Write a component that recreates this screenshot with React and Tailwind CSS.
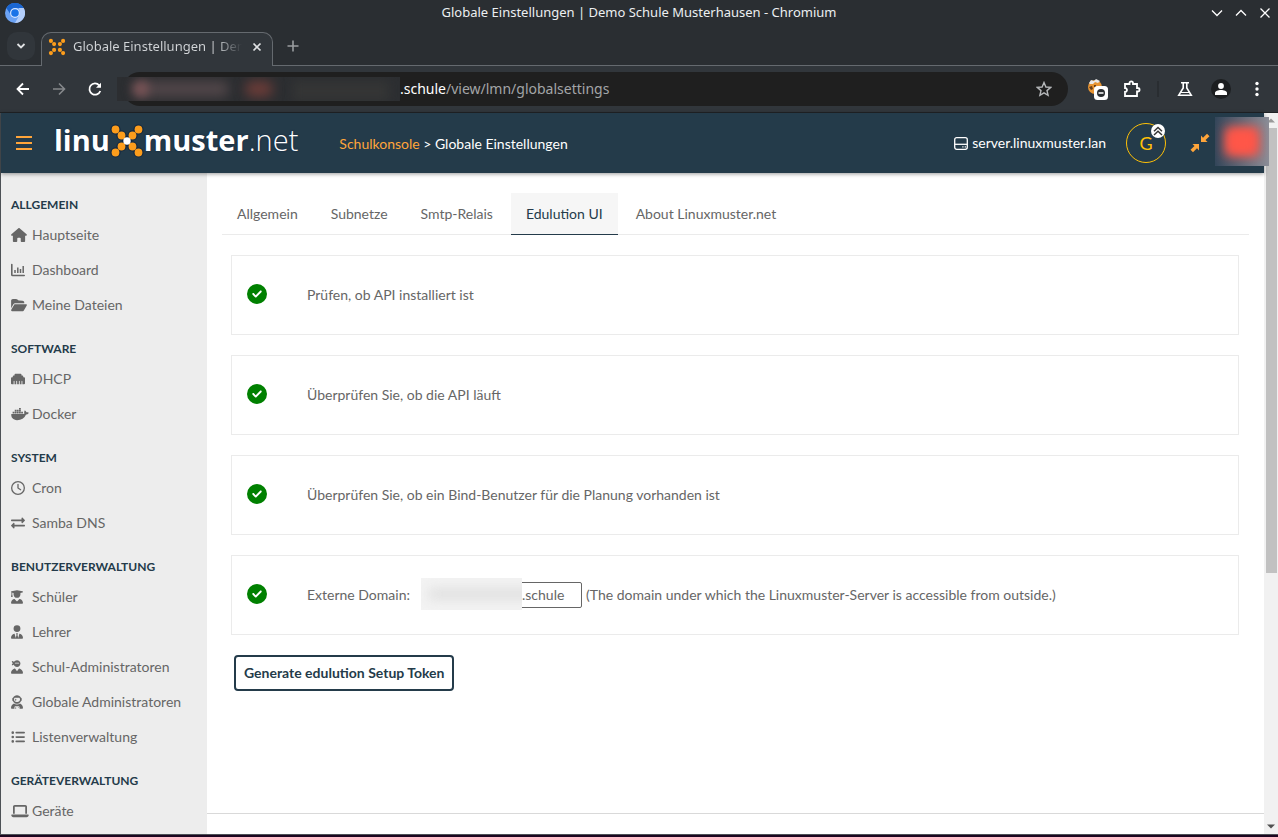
import React from "react";
import { FaExchangeAlt } from "react-icons/fa";
import {
  FaHouse, FaFolderOpen, FaEthernet, FaDocker, FaRegClock, FaUserGraduate,
  FaUserTie, FaUserNinja, FaUserAstronaut, FaListUl, FaLaptop, FaCircleCheck,
} from "react-icons/fa6";

function ChartIcon({ className }) {
  return (
    <svg viewBox="0 0 14 14" className={className} fill="none" stroke="currentColor" strokeLinecap="round">
      <path d="M.8 1.500V11.700Q.8 12.500 1.600 12.500H13.200" strokeWidth="1.600" />
      <path d="M4 7v3M6.800 4.500v5.500M9.500 6v4M12.200 3v7" strokeWidth="1.500" strokeLinecap="butt" />
    </svg>
  );
}

const narrow = "h-3.5 w-3";
const square = "size-3.5";
const wide = "h-3.5 w-4";
const widest = "h-3.5 w-[18px]";

const groups = [
  {
    title: "ALLGEMEIN",
    items: [["Hauptseite", FaHouse, wide], ["Dashboard", ChartIcon, square], ["Meine Dateien", FaFolderOpen, wide]],
  },
  { title: "SOFTWARE", items: [["DHCP", FaEthernet, square], ["Docker", FaDocker, widest]] },
  { title: "SYSTEM", items: [["Cron", FaRegClock, square], ["Samba DNS", FaExchangeAlt, square]] },
  {
    title: "BENUTZERVERWALTUNG",
    items: [
      ["Schüler", FaUserGraduate, narrow], ["Lehrer", FaUserTie, narrow], ["Schul-Administratoren", FaUserNinja, narrow],
      ["Globale Administratoren", FaUserAstronaut, narrow], ["Listenverwaltung", FaListUl, square],
    ],
  },
  { title: "GERÄTEVERWALTUNG", items: [["Geräte", FaLaptop, widest]] },
];

const tabs = ["Allgemein", "Subnetze", "Smtp-Relais", "Edulution UI", "About Linuxmuster.net"];

function Stroke({ d, className, width = 1.5, box = "0 0 16 16" }) {
  return (
    <svg viewBox={box} className={className} fill="none" stroke="currentColor" strokeWidth={width}>
      <path d={d} />
    </svg>
  );
}

function Dots({ className, center, outline }) {
  const dots = [[3.5, 3.5], [9.5, 9.5], [26.5, 3.5], [20.5, 9.5], [3.5, 26.5], [9.5, 20.5], [26.5, 26.5], [20.5, 20.5]];
  return (
    <svg viewBox="-2 -2 34 34" className={className} fill="#fc9d1c">
      {outline && dots.map(([x, y]) => <circle key={`o${x}-${y}`} cx={x} cy={y} r="5" fill="#10253f" />)}
      {center && <circle cx="15" cy="15" r="5" fill="#10253f" />}
      {dots.map(([x, y]) => <circle key={`${x}-${y}`} cx={x} cy={y} r="3.9" />)}
      {center && <circle cx="15" cy="15" r="3.7" fill="#fff" />}
    </svg>
  );
}

function TitleBar() {
  return (
    <div className="grid h-[26px] shrink-0 grid-cols-[100px_1fr_100px] items-center">
      <svg viewBox="0 0 20 20" className="ml-[5px] size-5">
        <circle cx="10" cy="10" r="10" fill="#6ca3f5" />
        <path d="M1.3 5A10 10 0 0 1 18.7 5H10L6 12Z" fill="#1a66d2" />
        <path d="M18.7 5A10 10 0 0 1 10 20l5-9-1-6Z" fill="#b3cefb" />
        <circle cx="10" cy="10" r="5" fill="#d5e5ff" />
        <circle cx="10" cy="10" r="3.8" fill="#1a73e8" />
      </svg>
      <div className="truncate text-center text-[13px] text-[#eceff1]">
        Globale Einstellungen | Demo Schule Musterhausen - Chromium
      </div>
      <div className="flex justify-end gap-3 pr-[7px] text-white">
        <button aria-label="Minimieren"><Stroke className="size-3" box="0 0 12 12" width={1.3} d="M1 3.5 6 8.5 11 3.5" /></button>
        <button aria-label="Maximieren"><Stroke className="size-3" box="0 0 12 12" width={1.3} d="M1 8.5 6 3.5 11 8.5" /></button>
        <button aria-label="Schließen"><Stroke className="size-3" box="0 0 12 12" width={1.3} d="M1.5 1.5 10.5 10.5M10.5 1.5 1.5 10.5" /></button>
      </div>
    </div>
  );
}

function TabStrip() {
  return (
    <div className="flex h-10 shrink-0">
      <div className="flex w-[41px] shrink-0 justify-end rounded-tl-lg border-b border-[#656a6f] pt-1.5 pl-1.5">
        <button aria-label="Tabs durchsuchen" className="mr-1.5 flex size-7 items-center justify-center rounded-[10px] bg-[#31363b] text-[#e0e2e4]">
          <Stroke className="size-3" box="0 0 12 12" width={1.8} d="M2.5 4 6 7.5 9.500 4" />
        </button>
      </div>
      <div className="mt-1.5 flex w-[232px] shrink-0 items-center rounded-t-[10px] border border-b-0 border-[#656a6f] bg-[#31363b] pb-1.5 pl-1.5">
        <Dots className="size-[18px]" />
        <div className="ml-[7px] w-[169px] overflow-hidden bg-linear-to-r from-[#d3d6d9] from-85% to-[#31363b] bg-clip-text text-[13px] whitespace-nowrap text-transparent">
          Globale Einstellungen | Demo Schule
        </div>
        <button aria-label="Tab schließen" className="ml-2.5 text-[#e0e2e4]">
          <Stroke className="size-2.5" box="0 0 10 10" width={1.7} d="M1.500 1.500 8.500 8.500M8.500 1.500 1.500 8.500" />
        </button>
      </div>
      <div className="flex flex-1 items-center rounded-tr-lg border-b border-[#656a6f] pl-[14px]">
        <button aria-label="Neuer Tab" className="text-[#9a9da0]">
          <Stroke className="size-3" box="0 0 12 12" width={1.6} d="M6 .5V11.500M.5 6H11.500" />
        </button>
      </div>
    </div>
  );
}

function Toolbar() {
  return (
    <div className="flex h-[47px] shrink-0 items-center border-b border-[#202326] bg-[#31363b] pr-[19px] pl-[15px] text-white">
      <button aria-label="Zurück"><Stroke className="size-4" width={1.8} d="M14 8H3M8 2.500 2.500 8 8 13.500" /></button>
      <button aria-label="Vorwärts" className="ml-5 text-[#85888b]"><Stroke className="size-4" width={1.6} d="M2 8H13M8 2.500 13.500 8 8 13.500" /></button>
      <button aria-label="Neu laden" className="ml-5">
        <svg viewBox="0 0 16 16" className="size-4" fill="none" stroke="currentColor" strokeWidth="1.8">
          <path d="M13.300 10A5.600 5.600 0 1 1 12.200 4.300L13 5.200" />
          <path d="M14 1.800V6.700H9Z" fill="currentColor" stroke="none" />
        </svg>
      </button>
      <div className="relative ml-5 flex h-[34px] flex-1 items-center rounded-full bg-[#1f1f1f] pr-4 pl-[277px] text-sm">
        <div className="absolute top-[5px] -left-1.5 h-6 w-[283px] overflow-hidden bg-[#2c2e31]">
          <div className="absolute top-1 left-4 h-4 w-24 rounded-full bg-[#514649] blur-[6px]" />
          <div className="absolute top-1 left-4 h-4 w-4 rounded-full bg-[#7a5356] blur-[5px]" />
          <div className="absolute top-1 left-32 h-4 w-7 rounded-full bg-[#6b3c38] blur-[6px]" />
          <div className="absolute top-1 left-44 h-5 w-24 bg-[#343535] blur-[5px]" />
        </div>
        <span className="text-white">.schule</span>
        <span className="flex-1 text-[#a3a5a7]">/view/lmn/globalsettings</span>
        <button aria-label="Lesezeichen" className="text-[#b5b7b9]">
          <Stroke className="size-4" width={1.400} d="M8 1.500 9.900 6 14.700 6.400 11 9.600 12.100 14.300 8 11.800 3.900 14.300 5 9.600 1.300 6.400 6.100 6Z" />
        </button>
      </div>
      <button aria-label="Cookie-Erweiterung" className="ml-[18px]">
        <svg viewBox="0 0 23 23" className="size-[23px]">
          <circle cx="9" cy="9" r="7" fill="#e79432" />
          <path d="M3 5 5 2l3 1 2-2 4 2-2 2-3-1-2 2-3 0Z" fill="#e9e9e9" />
          <path d="M3 9l3-1 1 3-2 1Zm5-2h2v2H8Z" fill="#633d1b" />
          <rect x="8" y="8" width="14" height="14" rx="3.500" fill="#fff" />
          <circle cx="15" cy="15" r="4" fill="#2a2d30" />
          <path d="M12.500 15h5" stroke="#fff" strokeWidth="1.500" />
        </svg>
      </button>
      <button aria-label="Erweiterungen" className="ml-3.5">
        <Stroke className="size-[18px]" box="0 0 18 18" width={1.800} d="M2 4H6.500V3.200A1.700 1.700 0 0 1 10 3.200V4H14V8H14.800A1.700 1.700 0 0 1 14.800 11.500H14V16H2V12A2 2 0 0 0 2 8Z" />
      </button>
      <div className="ml-4 h-4 w-0.5 bg-[#292d31]" />
      <button aria-label="Labs" className="ml-[18px]">
        <svg viewBox="0 0 16 16" className="size-4" fill="none" stroke="currentColor" strokeWidth="1.600">
          <path d="M4 1.800H12M6.200 2V7L1.800 14.200H14.200L9.800 7V2" />
          <path d="M4 11.500h8" strokeWidth="1" />
        </svg>
      </button>
      <button aria-label="Profil" className="ml-[18px] flex size-5 items-center justify-center rounded-full bg-[#1c1e20]">
        <svg viewBox="0 0 12 12" className="size-3" fill="currentColor">
          <circle cx="6" cy="3" r="2.900" />
          <path d="M0 12V10C0 8 3 7 6 7S12 8 12 10V12Z" />
        </svg>
      </button>
      <button aria-label="Menü" className="ml-6">
        <svg viewBox="0 0 4 16" className="h-4 w-1" fill="currentColor">
          <circle cx="2" cy="2.500" r="1.700" /><circle cx="2" cy="8" r="1.700" /><circle cx="2" cy="13.500" r="1.700" />
        </svg>
      </button>
    </div>
  );
}

function Header() {
  return (
    <header className="relative z-10 flex h-[60px] shrink-0 items-center bg-[#243b4a] pl-[15px] text-sm text-white shadow-[0_1px_4px_rgba(0,0,0,0.4)]">
      <button aria-label="Navigation" className="text-[#ffa53a]">
        <Stroke className="size-4" width={2} d="M0 2H16M0 8H16M0 14H16" />
      </button>
      <a href="#" aria-label="linuxmuster.net" className="mb-1.5 ml-[22px] flex items-center font-['Open_Sans',sans-serif] text-[29px] leading-8 [text-shadow:0_0_2px_#0a2040]">
        <span className="font-bold">linu</span>
        <Dots className="mt-0.5 size-[34px]" center outline />
        <span className="font-bold">muster</span>
        <span className="font-light">.net</span>
      </a>
      <nav className="ml-[41px] flex-1 pt-0.5 whitespace-nowrap">
        <a href="#" className="text-[#ffa53a]">Schulkonsole</a> &gt; Globale Einstellungen
      </nav>
      <div className="flex items-center gap-1">
        <svg viewBox="0 0 14 13" className="h-[13px] w-3.5" fill="none" stroke="currentColor" strokeWidth="1.300">
          <rect x=".7" y=".7" width="12.600" height="11.600" rx="2" />
          <path d="M.7 7.300H13.300" /><path d="M8.300 9.800h1.200M10.700 9.800h1.200" />
        </svg>
        server.linuxmuster.lan
      </div>
      <button aria-label="Benutzer G" className="relative ml-5 size-10 rounded-full border border-[#ffc107] text-lg text-[#ffc107]">
        G
        <svg viewBox="0 0 14 14" className="absolute top-0 right-0 size-3.5">
          <circle cx="7" cy="7" r="7" fill="#fff" />
          <path d="M3 7.200 7 3.500 11 7.200M3 11 7 7.300 11 11" fill="none" stroke="#333" strokeWidth="1.500" />
        </svg>
      </button>
      <button aria-label="Verkleinern" className="mr-[54px] ml-6 text-[#ffa53a]">
        <svg viewBox="0 0 20 20" className="size-5" fill="currentColor">
          <path d="M11 2.500V9H17.500L15.500 7 19.500 3.200 17 .8 13 4.700ZM9 17.500V11H2.500L4.500 13 .5 16.800 3 19.200 7 15.300Z" />
        </svg>
      </button>
      <div className="absolute top-1 -right-[5px] h-[49px] w-[54px] overflow-hidden bg-linear-to-r from-[#33465a] to-[#8b8e98]">
        <div className="absolute inset-2.5 bg-[#f9564a] blur-[6px]" />
        <div className="absolute inset-3.5 bg-[#ff5648] blur-[5px]" />
      </div>
    </header>
  );
}

function Sidebar() {
  return (
    <aside className="w-[206px] shrink-0 overflow-hidden bg-[#ededed] pt-[19px] pl-2.5">
      {groups.map((g) => (
        <section key={g.title} className="mb-3.5">
          <h2 className="h-[25px] text-xs leading-[25px] font-bold text-[#243b4a]">{g.title}</h2>
          {g.items.map(([label, Icon, size]) => (
            <a key={label} href="#" className="flex h-[35px] items-center text-sm text-[#666]">
              <span className="flex w-[21px] shrink-0"><Icon className={size} /></span>
              <span className="whitespace-nowrap">{label}</span>
            </a>
          ))}
        </section>
      ))}
    </aside>
  );
}

function Card({ children }) {
  return (
    <div className="flex h-20 items-center border border-[#ebebeb] pl-[15px]">
      <FaCircleCheck className="mr-10 mb-0.5 size-5 shrink-0 text-[#008000]" />
      <div className="flex items-center whitespace-nowrap">{children}</div>
    </div>
  );
}

function Main() {
  return (
    <main className="flex min-w-0 flex-1 flex-col overflow-hidden bg-white text-sm text-[#666]">
      <div className="flex-1">
        <div role="tablist" className="mx-[15px] mt-5 flex gap-[3px] border-b border-[#ebebeb]">
          {tabs.map((t, i) => (
            <button
              key={t}
              role="tab"
              aria-selected={i === 3}
              className={i === 3
                ? "-mb-px h-[42px] border-b border-[#243b4a] bg-[#f6f6f6] px-[15px] text-[#243b4a]"
                : "h-[41px] px-[15px]"}
            >
              {t}
            </button>
          ))}
        </div>
        <div className="mr-[25px] ml-6 flex flex-col gap-5 pt-5">
          <Card>Prüfen, ob API installiert ist</Card>
          <Card>Überprüfen Sie, ob die API läuft</Card>
          <Card>Überprüfen Sie, ob ein Bind-Benutzer für die Planung vorhanden ist</Card>
          <Card>
            <label htmlFor="domain" className="w-[114px]">Externe Domain:</label>
            <div className="relative mr-1">
              <input id="domain" defaultValue=".schule" className="block h-[26px] w-[161px] rounded-xs border border-[#666] pb-0.5 pl-[100px]" />
              <div className="absolute -top-1 left-0 h-8 w-[101px] overflow-hidden bg-[#f3f3f3]">
                <div className="absolute top-2.5 left-2 h-3 w-28 bg-[#e0e0e0] blur-[6px]" />
              </div>
            </div>
            <span>(The domain under which the Linuxmuster-Server is accessible from outside.)</span>
          </Card>
        </div>
        <button className="mt-5 ml-[27px] h-9 rounded border-2 border-[#243b4a] px-2 font-bold text-[#243b4a]">
          Generate edulution Setup Token
        </button>
      </div>
      <div className="h-[21px] shrink-0 border-t border-[#d9d9d9]" />
    </main>
  );
}

export default function App() {
  return (
    <div className="flex h-screen flex-col overflow-hidden border-b-2 border-[#1c0620] bg-[#2a2e32] font-['Noto_Sans',sans-serif]">
      <TitleBar />
      <TabStrip />
      <Toolbar />
      <div className="flex min-h-0 flex-1 border-b border-l border-[#4d5156] font-['Lato',sans-serif]">
        <div className="z-10 flex min-w-0 flex-1 flex-col">
          <Header />
          <div className="flex min-h-0 flex-1">
            <Sidebar />
            <Main />
          </div>
        </div>
        <div className="flex w-3.5 shrink-0 flex-col items-center bg-[#f1f1f1]">
          <svg viewBox="0 0 14 15" className="h-[15px] w-3.5"><path d="M3 9.500 7 5.500 11 9.500Z" fill="#999" /></svg>
          <div className="h-[445px] w-[11px] bg-[#c1c1c1]" />
          <div className="flex-1" />
          <svg viewBox="0 0 14 15" className="h-[15px] w-3.5"><path d="M3 5.500 7 9.500 11 5.500Z" fill="#505050" /></svg>
        </div>
      </div>
    </div>
  );
}
